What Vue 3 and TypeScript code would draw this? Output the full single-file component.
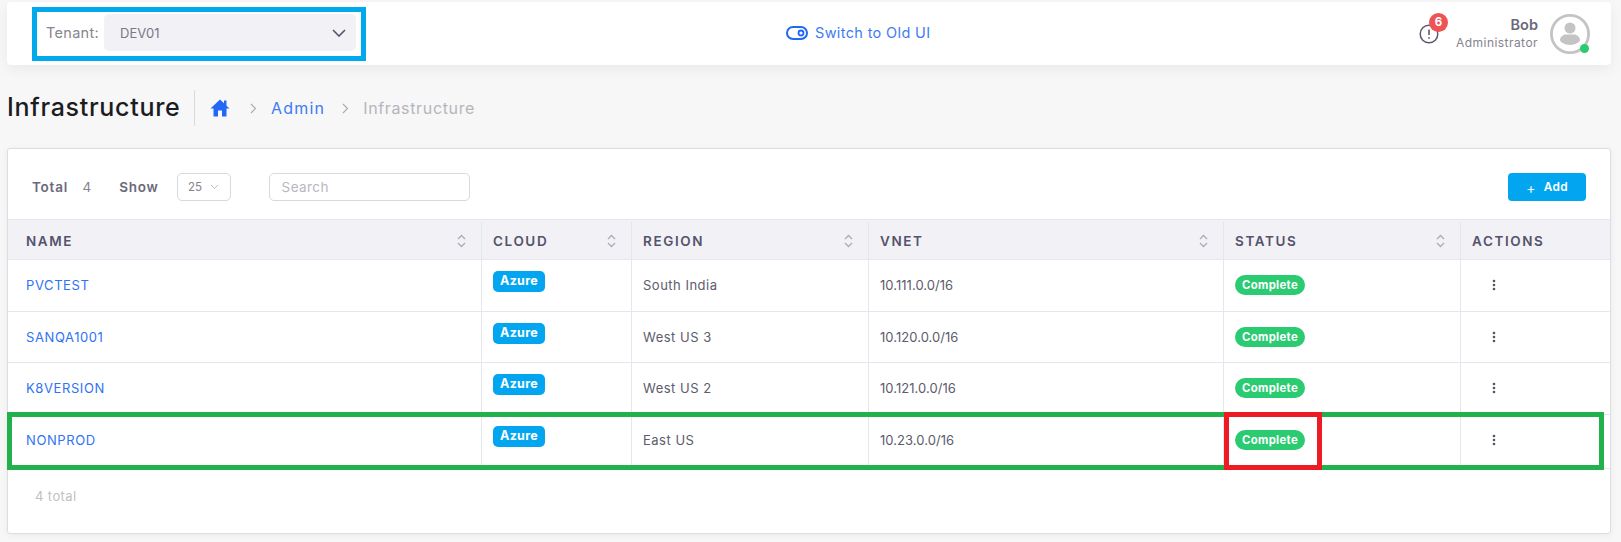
<script setup lang="ts">
interface Row { name: string; region: string; vnet: string; tall?: boolean }
const rows: Row[] = [
  { name: 'PVCTEST', region: 'South India', vnet: '10.111.0.0/16' },
  { name: 'SANQA1001', region: 'West US 3', vnet: '10.120.0.0/16' },
  { name: 'K8VERSION', region: 'West US 2', vnet: '10.121.0.0/16' },
  { name: 'NONPROD', region: 'East US', vnet: '10.23.0.0/16', tall: true },
]
const columns = [
  { label: 'NAME', sort: true },
  { label: 'CLOUD', sort: true },
  { label: 'REGION', sort: true },
  { label: 'VNET', sort: true },
  { label: 'STATUS', sort: true },
  { label: 'ACTIONS', sort: false },
]
</script>

<template>
  <div class="page">
    <header class="topbar">
      <div class="tenant">
        <span class="tenant-label">Tenant:</span>
        <div class="tenant-select">
          <span>DEV01</span>
          <svg width="14" height="8" viewBox="0 0 14 8" fill="none"><path d="M1 1l6 6 6-6" stroke="#55536a" stroke-width="1.6" /></svg>
        </div>
      </div>
      <a class="switch">
        <svg width="22" height="14" viewBox="0 0 22 14" fill="none">
          <rect x="1" y="1" width="20" height="12" rx="6" stroke="#2068f5" stroke-width="2" />
          <circle cx="15" cy="7" r="2.5" stroke="#2068f5" stroke-width="1.8" />
        </svg>
        <span>Switch to Old UI</span>
      </a>
      <div class="user">
        <div class="alert">
          <svg width="20" height="20" viewBox="0 0 20 20" fill="none">
            <circle cx="10" cy="10" r="8.8" stroke="#5b596e" stroke-width="1.5" />
            <path d="M10 5.5v5.5M10 13.2v1.6" stroke="#5b596e" stroke-width="1.6" />
          </svg>
          <span class="alert-badge">6</span>
        </div>
        <div class="user-text">
          <span class="user-name">Bob</span>
          <span class="user-role">Administrator</span>
        </div>
        <div class="avatar">
          <svg width="40" height="40" viewBox="0 0 40 40" fill="none">
            <circle cx="20" cy="20" r="18.6" stroke="#c4c4c4" stroke-width="2.8" />
            <circle cx="20" cy="14" r="5.5" fill="#c4c4c4" />
            <path d="M10 26c0-3 3-5.500 6-5.500h8c3 0 6 2.500 6 5.500 0 2-5 5-10 5s-10-3-10-5z" fill="#c4c4c4" />
          </svg>
          <span class="online"></span>
        </div>
      </div>
    </header>

    <div class="crumbs">
      <h1>Infrastructure</h1>
      <svg class="home" width="20" height="18" viewBox="0 0 20 18"><path d="M10 0.500 0.500 9.500H3.500V17.500H8V11.500H12V17.500H16.500V9.500H19.500L16.500 6.700V1.500H14V4.300z" fill="#2068f5" /></svg>
      <svg class="sep sep-a" width="7" height="11" viewBox="0 0 7 11" fill="none"><path d="M1 1l4.500 4.500L1 10" stroke="#a9a9b2" stroke-width="1.100" /></svg>
      <a class="crumb-link">Admin</a>
      <svg class="sep sep-b" width="7" height="11" viewBox="0 0 7 11" fill="none"><path d="M1 1l4.500 4.500L1 10" stroke="#a9a9b2" stroke-width="1.100" /></svg>
      <span class="crumb-current">Infrastructure</span>
    </div>

    <section class="card">
      <div class="toolbar">
        <span class="tb-label">Total</span>
        <span class="tb-count">4</span>
        <span class="tb-label show">Show</span>
        <div class="show-select">
          <span>25</span>
          <svg width="9" height="6" viewBox="0 0 9 6" fill="none"><path d="M1 1l3.500 3.500L8 1" stroke="#b9b9c4" stroke-width="1" /></svg>
        </div>
        <div class="search">Search</div>
        <button class="add" type="button"><span class="plus">+</span>Add</button>
      </div>

      <div class="table">
        <div class="row head">
          <div v-for="c in columns" :key="c.label" class="cell">
            <span>{{ c.label }}</span>
            <svg v-if="c.sort" width="9" height="14" viewBox="0 0 9 14" fill="none">
              <path d="M1 5l3.500-3.500L8 5M1 9l3.500 3.500L8 9" stroke="#adadb9" stroke-width="1.400" />
            </svg>
          </div>
        </div>
        <div v-for="r in rows" :key="r.name" class="row body" :class="{ tall: r.tall }">
          <div class="cell"><a class="name">{{ r.name }}</a></div>
          <div class="cell top"><span class="azure">Azure</span></div>
          <div class="cell">{{ r.region }}</div>
          <div class="cell vnet">{{ r.vnet }}</div>
          <div class="cell"><span class="complete">Complete</span></div>
          <div class="cell action">
            <svg width="4" height="12" viewBox="0 0 4 12"><circle cx="2" cy="2" r="1.300" fill="#55536a" /><circle cx="2" cy="6" r="1.300" fill="#55536a" /><circle cx="2" cy="10" r="1.300" fill="#55536a" /></svg>
          </div>
        </div>
      </div>
      <div class="foot">4 total</div>
    </section>

    <div class="mark mark-blue"></div>
    <div class="mark mark-green"></div>
    <div class="mark mark-red"></div>
  </div>
</template>

<style>
html, body { margin: 0; background: #f7f7f7; }
</style>

<style scoped>
.page {
  position: relative;
  width: 1621px;
  height: 542px;
  overflow: hidden;
  box-sizing: border-box;
  padding: 2px 10px 0 7px;
  background: #f7f7f7;
  font-family: Inter, "Noto Sans", sans-serif;
  color: #55536a;
}
.topbar {
  position: relative;
  display: flex;
  align-items: center;
  justify-content: space-between;
  height: 63px;
  padding: 0 21px 0 30px;
  background: #fff;
  border-radius: 4px;
  box-shadow: 0 4px 14px rgba(0, 0, 0, 0.06);
}
.tenant { display: flex; align-items: center; gap: 5px; margin-top: -2px; }
.tenant-label { width: 53px; margin-left: 9px; font-size: 14.500px; letter-spacing: 0.300px; color: #86868f; white-space: nowrap; }
.tenant-select {
  display: flex;
  align-items: center;
  justify-content: space-between;
  box-sizing: border-box;
  width: 252px;
  height: 37px;
  padding: 0 10px 0 16px;
  border-radius: 5px;
  background: #f1f1f6;
  font-size: 13px;
  color: #7a7885;
}
.switch {
  display: flex;
  align-items: center;
  gap: 7px;
  position: absolute;
  left: 779px;
  top: 22px;
  font-size: 14.500px;
  letter-spacing: 0.350px;
  color: #3f7bf2;
}
.user { display: flex; align-items: center; }
.alert { position: relative; display: flex; margin-right: 17px; }
.alert-badge {
  position: absolute;
  left: 10px;
  top: -11px;
  width: 19px;
  height: 19px;
  border-radius: 50%;
  background: #ee5356;
  color: #fff;
  font-size: 11.500px;
  font-weight: 700;
  line-height: 19px;
  text-align: center;
}
.user-text { display: flex; flex-direction: column; align-items: flex-end; margin-right: 12px; }
.user-name { font-size: 14.500px; font-weight: 600; line-height: 18px; color: #6b6979; }
.user-role { font-size: 12px; line-height: 18px; letter-spacing: 0.450px; color: #85838f; }
.avatar { position: relative; width: 40px; height: 40px; }
.online {
  position: absolute;
  right: 1px;
  bottom: 1px;
  width: 9px;
  height: 9px;
  border-radius: 50%;
  background: #2bcb72;
}
.crumbs { display: flex; align-items: center; height: 36px; margin-top: 25px; }
h1 {
  margin: 0;
  box-sizing: border-box;
  width: 188px;
  height: 36px;
  border-right: 1px solid #d7d9e0;
  font-size: 25px;
  font-weight: 500;
  line-height: 35px;
  letter-spacing: 0.700px;
  color: #1c1c1f;
  white-space: nowrap;
}
.home { margin-left: 15px; }
.sep-a { margin: 0 14px 0 20px; }
.sep-b { margin: 0 14px 0 17px; }
.crumb-link { font-size: 16px; letter-spacing: 1.200px; color: #3f7bf2; }
.crumb-current { font-size: 16px; letter-spacing: 0.650px; color: #b5b5bb; }
.card {
  display: flex;
  flex-direction: column;
  height: 386px;
  margin-top: 22px;
  box-sizing: border-box;
  background: #fff;
  border: 1px solid #dedee2;
  border-radius: 3px;
  box-shadow: 0 1px 6px rgba(0, 0, 0, 0.06);
}
.toolbar { display: flex; align-items: center; height: 70px; padding: 6px 24px 0 24px; flex: none; box-sizing: border-box; }
.tb-label { font-size: 13.500px; font-weight: 600; letter-spacing: 0.750px; color: #6b6979; }
.tb-count { margin-left: 14.500px; font-size: 13.500px; color: #85838f; }
.tb-label.show { margin-left: 28px; }
.show-select {
  display: flex;
  align-items: center;
  justify-content: center;
  gap: 8px;
  box-sizing: border-box;
  width: 54px;
  height: 28px;
  margin-left: 18px;
  border: 1px solid #d8d8e0;
  border-radius: 5px;
  font-size: 11.500px;
  color: #85838f;
}
.search {
  box-sizing: border-box;
  width: 201px;
  height: 28px;
  margin-left: 38px;
  padding-left: 12px;
  border: 1px solid #d8d8e0;
  border-radius: 5px;
  font-size: 13.500px;
  letter-spacing: 0.400px;
  line-height: 26px;
  color: #b7b7c1;
}
.add {
  display: flex;
  align-items: center;
  justify-content: center;
  gap: 8px;
  width: 78px;
  height: 28px;
  margin-left: auto;
  border: 0;
  border-radius: 4px;
  background: #02a6f0;
  color: #fff;
  font-family: inherit;
  font-size: 11.800px;
  font-weight: 600;
  letter-spacing: 0.300px;
}
.plus { font-size: 14px; font-weight: 400; }
.table { flex: none; }
.row {
  display: grid;
  grid-template-columns: 473px 150px 237px 355px 237px 1fr;
  border-bottom: 1px solid #e6e6ee;
}
.row.head { height: 41px; box-sizing: border-box; padding-top: 2px; border-top: 1px solid #e6e6ee; background: #f1f1f6; }
.row.body { height: 51.500px; box-sizing: border-box; }
.row.body.tall { height: 54.500px; padding-bottom: 3px; }
.cell {
  display: flex;
  align-items: center;
  justify-content: space-between;
  box-sizing: border-box;
  padding: 0 11px;
  border-left: 1px solid #e6e6ee;
  font-size: 13px;
  letter-spacing: 0.500px;
  color: #5d5b6c;
}
.cell:first-child { padding-left: 18px; border-left: 0; }
.cell.vnet { letter-spacing: 0.050px; }
.head .cell {
  padding-right: 15px;
  font-size: 13.500px;
  font-weight: 600;
  letter-spacing: 1.600px;
  color: #55536a;
}
.cell.top { align-items: flex-start; padding-top: 11px; }
.name { font-size: 13px; letter-spacing: 0.600px; color: #2f72f4; }
.azure {
  padding: 0 7px;
  height: 21px;
  border-radius: 5px;
  background: #02a6f0;
  color: #fff;
  font-size: 12.500px;
  font-weight: 700;
  line-height: 20px;
  letter-spacing: 0.300px;
}
.complete {
  padding: 0 7px;
  height: 20px;
  border-radius: 10px;
  background: #2bcb72;
  color: #fff;
  font-size: 11.300px;
  font-weight: 700;
  line-height: 20px;
  letter-spacing: 0.350px;
}
.action { justify-content: flex-start; padding-left: 31px; }
.foot { padding: 19px 0 0 27px; font-size: 13px; letter-spacing: 0.400px; color: #c0c0c6; }
.mark { position: absolute; box-sizing: border-box; border-style: solid; border-width: 5px; pointer-events: none; }
.mark-blue { left: 32px; top: 7px; width: 334px; height: 54px; border-color: #00a8ec; }
.mark-green { left: 7px; top: 412px; width: 1597px; height: 58px; border-color: #22b14c; }
.mark-red { left: 1224px; top: 412px; width: 98px; height: 58px; border-color: #ed1c24; }
</style>
